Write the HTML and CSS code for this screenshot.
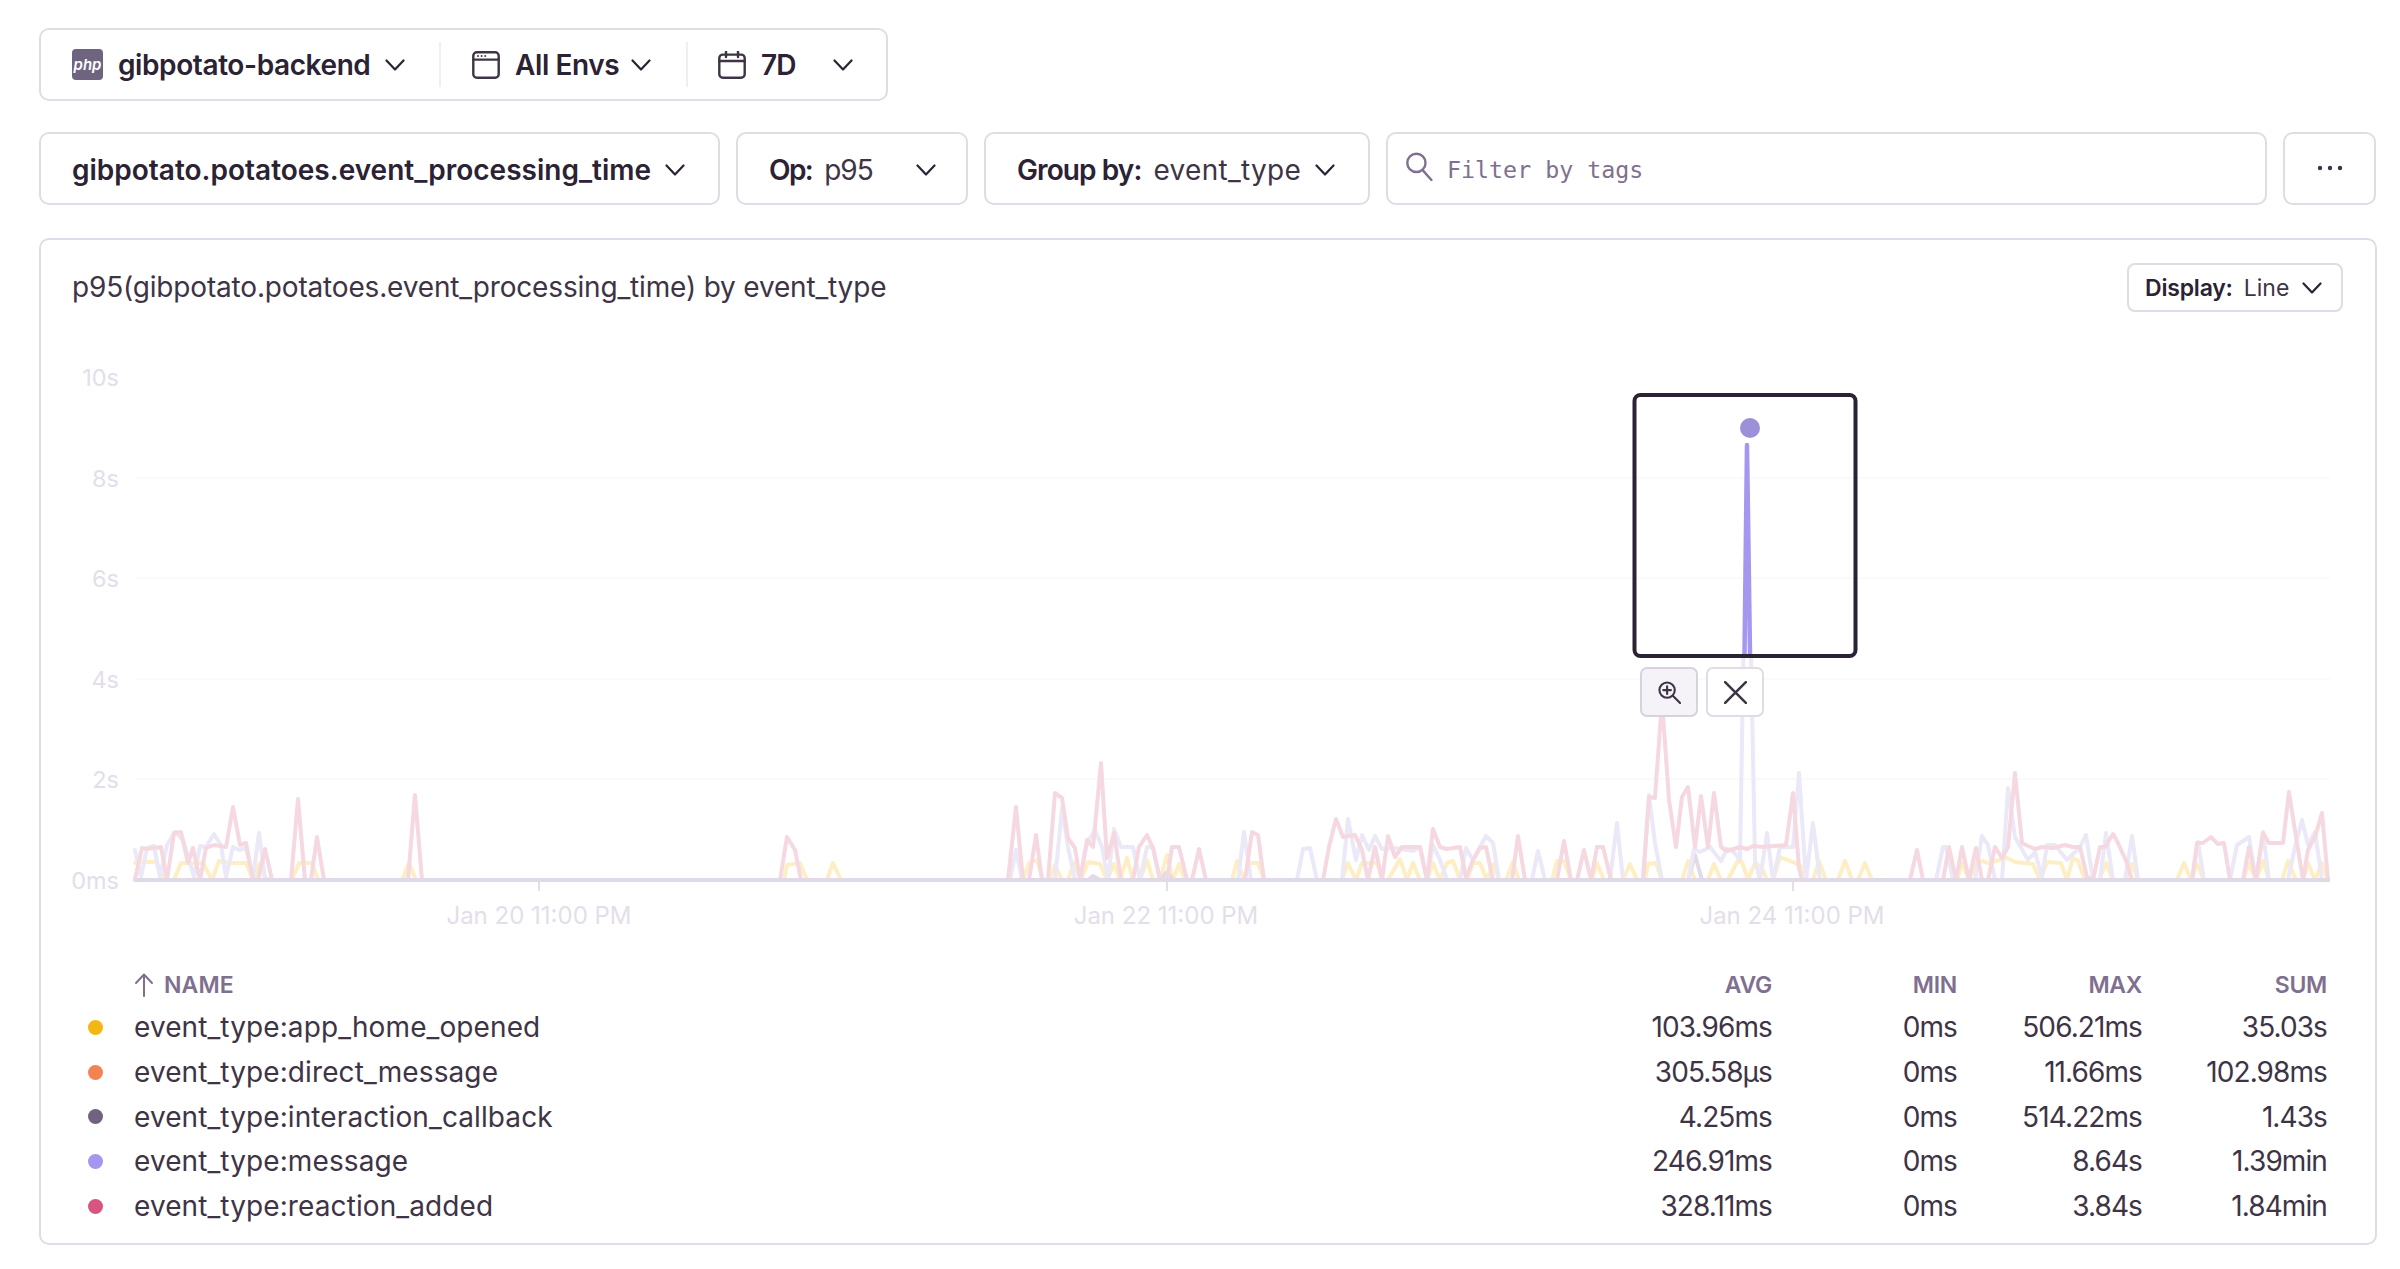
FILE: index.html
```html
<!DOCTYPE html>
<html lang="en">
<head>
<meta charset="utf-8">
<title>Metrics</title>
<link rel="stylesheet" href="styles.css">
</head>
<body>
<main class="page">
  <div class="page-filter">
    <div class="pf-item pf-project">
      <svg class="php" viewBox="0 0 31 31"><rect width="31" height="31" rx="4" fill="#6f6480"/></svg>
      <span class="php-label">php</span>
      <span class="pf-text">gibpotato-backend</span>
      <svg class="chev" viewBox="0 0 20 12"><path d="M1.5 1.5 10 10.5 18.5 1.5"/></svg>
    </div>
    <div class="pf-item pf-env">
      <svg class="pf-icon" viewBox="0 0 28 28"><rect x="1.3" y="1.3" width="25.4" height="25.4" rx="3.5"/><path d="M1.3 8.6H26.7"/><circle class="dot" cx="6" cy="5" r="1"/><circle class="dot" cx="9.6" cy="5" r="1"/><circle class="dot" cx="13.2" cy="5" r="1"/></svg>
      <span class="pf-text">All Envs</span>
      <svg class="chev" viewBox="0 0 20 12"><path d="M1.5 1.5 10 10.5 18.5 1.5"/></svg>
    </div>
    <div class="pf-item pf-date">
      <svg class="pf-icon" viewBox="0 0 28 28"><rect x="1.3" y="3.6" width="25.4" height="23.1" rx="3.5"/><path d="M1.3 10H26.7M8 .5V6M20 .5V6"/></svg>
      <span class="pf-text pf-text-date">7D</span>
      <svg class="chev chev-date" viewBox="0 0 20 12"><path d="M1.5 1.5 10 10.5 18.5 1.5"/></svg>
    </div>
  </div>

  <div class="query">
    <div class="ctl ctl-metric"><b>gibpotato.potatoes.event_processing_time</b><svg class="chev" viewBox="0 0 20 12"><path d="M1.5 1.5 10 10.5 18.5 1.5"/></svg></div>
    <div class="ctl ctl-op"><b>Op:</b><span>p95</span><svg class="chev" viewBox="0 0 20 12"><path d="M1.5 1.5 10 10.5 18.5 1.5"/></svg></div>
    <div class="ctl ctl-group"><b>Group by:</b><span>event_type</span><svg class="chev" viewBox="0 0 20 12"><path d="M1.5 1.5 10 10.5 18.5 1.5"/></svg></div>
    <div class="ctl ctl-search">
      <svg class="search" viewBox="0 0 26 28"><circle cx="10.5" cy="10.5" r="8.8"/><path d="M16.5 17.5 25 27"/></svg>
      <span class="placeholder">Filter by tags</span>
    </div>
    <div class="ctl ctl-more"><svg class="more" viewBox="0 0 26 6"><circle cx="3" cy="3" r="2.2"/><circle cx="13" cy="3" r="2.2"/><circle cx="23" cy="3" r="2.2"/></svg></div>
  </div>

  <section class="panel">
    <header class="panel-head">
      <h2 class="panel-title">p95(gibpotato.potatoes.event_processing_time) by event_type</h2>
      <div class="display-btn"><b>Display:</b><span>Line</span><svg class="chev" viewBox="0 0 20 12"><path d="M1.5 1.5 10 10.5 18.5 1.5"/></svg></div>
    </header>

    <div class="chart">
      <svg class="chart-svg" viewBox="41 330 2333 635">
        <g class="grid">
          <path d="M135 478H2330M135 578H2330M135 679H2330M135 779H2330"/>
        </g>
        <g class="axis-y">
          <text x="119" y="386">10s</text>
          <text x="119" y="487">8s</text>
          <text x="119" y="587">6s</text>
          <text x="119" y="688">4s</text>
          <text x="119" y="788">2s</text>
          <text x="119" y="889">0ms</text>
        </g>
        <g class="axis-x">
          <path class="tick" d="M539 882V891M1167 882V891M1793 882V891"/>
          <text x="539" y="924">Jan 20 11:00 PM</text>
          <text x="1166" y="924">Jan 22 11:00 PM</text>
          <text x="1792" y="924">Jan 24 11:00 PM</text>
        </g>
        <polyline class="s-yellow" points="135,863 142,862 156,862 165,880 174,880 181,863 203,863 212,880 219,861 231,863 246,863 253,880 260,863 266,880 292,880 299,863 312,863 318,880 402,880 409,863 416,880 784,880 787,865 800,863 807,880 827,880 833,863 841,880 1023,880 1029,863 1037,860 1043,880 1050,880 1055,865 1062,880 1068,880 1074,863 1081,880 1088,862 1100,864 1107,880 1114,864 1120,880 1127,858 1133,880 1140,880 1147,860 1153,880 1160,880 1167,855 1173,880 1179,864 1185,880 1232,880 1237,861 1244,880 1250,863 1258,863 1264,880 1342,880 1348,863 1356,880 1362,863 1377,863 1383,880 1388,880 1400,859 1407,880 1413,863 1420,880 1427,880 1433,863 1440,880 1447,863 1453,861 1460,880 1467,880 1473,863 1480,863 1487,880 1493,864 1499,880 1506,880 1513,862 1519,880 1552,880 1557,861 1564,861 1571,880 1592,880 1597,863 1604,880 1623,880 1630,864 1637,880 1645,880 1648,864 1656,863 1662,880 1682,880 1688,861 1695,880 1708,880 1714,864 1721,880 1728,880 1737,862 1742,862 1748,880 1755,863 1762,868 1767,880 1773,880 1780,857 1795,863 1802,867 1807,880 1813,880 1819,861 1826,880 1838,880 1845,861 1852,880 1858,880 1865,863 1872,880 1957,880 1962,863 1969,880 1976,863 1982,861 1988,863 2007,858 2015,862 2033,864 2040,880 2047,862 2061,863 2067,880 2073,858 2078,861 2085,880 2099,880 2106,863 2113,880 2126,880 2132,864 2138,880 2177,880 2184,863 2191,880 2197,864 2204,880 2243,880 2249,863 2256,880 2263,861 2269,880 2282,880 2288,861 2296,880 2303,880 2308,863 2315,880 2322,863 2328,880"/>
        <polyline class="s-gray" points="135,880 1088,880 1093,876 1100,880 1160,880 1167,872 1173,880 1688,880 1695,855 1702,880 2328,880"/>
        <polyline class="s-purple" points="135,850 141,877 147,848 154,846 160,877 167,845 175,832 183,840 194,877 200,846 206,847 214,834 221,845 226,877 233,847 239,850 246,848 253,878 259,833 265,878 272,880 1010,880 1016,850 1022,880 1055,880 1062,808 1068,847 1075,880 1080,880 1087,843 1095,830 1102,847 1108,880 1114,829 1121,847 1133,847 1140,880 1147,847 1153,847 1160,880 1238,880 1244,832 1251,880 1297,880 1303,849 1310,848 1317,880 1342,880 1348,819 1356,860 1362,835 1369,850 1375,836 1382,849 1395,848 1413,851 1420,847 1427,880 1433,845 1440,860 1447,880 1460,880 1466,848 1473,860 1480,847 1486,836 1493,843 1499,880 1532,880 1538,851 1545,880 1610,880 1617,823 1623,880 1643,880 1649,795 1655,843 1662,880 1688,880 1694,849 1700,852 1710,847 1721,861 1727,849 1733,851 1740,860 1747,445 1755,860 1760,880 1767,833 1773,880 1780,847 1793,847 1799,773 1806,880 1813,823 1820,880 1936,880 1943,847 1946,847 1953,880 1975,880 1982,836 1988,845 1995,880 2002,880 2008,788 2015,837 2028,860 2035,852 2042,877 2047,845 2055,845 2067,860 2080,847 2086,835 2093,880 2100,880 2106,833 2113,880 2125,880 2132,836 2138,880 2192,880 2198,842 2204,880 2230,880 2237,845 2249,837 2256,880 2263,832 2269,880 2288,880 2295,847 2302,820 2308,845 2315,832 2322,880 2328,880"/>
        <polyline class="s-pink" points="135,879 142,848 147,849 161,847 167,880 174,833 181,832 188,863 193,848 200,880 206,848 214,845 226,847 233,807 240,845 246,843 253,880 258,880 265,849 272,880 291,880 298,799 305,880 311,880 317,837 324,880 408,880 415,795 422,880 780,880 787,837 795,850 801,880 1008,880 1016,807 1023,880 1029,880 1036,835 1042,880 1048,880 1055,793 1062,798 1068,838 1075,848 1080,880 1087,840 1093,847 1101,763 1107,858 1114,833 1121,880 1133,880 1139,847 1147,835 1153,848 1160,880 1167,880 1172,847 1179,847 1187,880 1192,880 1199,849 1206,880 1245,880 1252,832 1258,835 1264,880 1323,880 1329,847 1336,819 1343,837 1355,835 1362,850 1368,880 1375,847 1382,880 1388,836 1395,857 1402,847 1420,847 1427,880 1433,829 1440,847 1447,849 1460,847 1466,878 1473,860 1480,848 1486,847 1493,880 1512,880 1518,836 1525,880 1557,880 1564,841 1571,880 1577,880 1584,850 1591,880 1597,847 1603,847 1611,880 1643,880 1649,797 1655,798 1662,700 1669,800 1676,847 1682,797 1688,787 1695,847 1701,796 1708,847 1714,793 1721,847 1727,851 1740,847 1747,849 1753,846 1763,847 1786,845 1793,793 1799,868 1802,880 1910,880 1917,850 1923,880 1943,880 1949,847 1956,880 1962,847 1969,880 1976,848 1982,880 1988,880 1995,847 2002,858 2008,847 2015,773 2022,843 2028,846 2035,849 2042,847 2053,848 2065,845 2073,847 2080,847 2087,877 2093,880 2100,847 2105,847 2113,834 2118,843 2127,863 2132,880 2192,880 2197,843 2203,843 2211,837 2218,844 2224,843 2230,880 2243,880 2249,847 2256,880 2263,833 2269,843 2283,843 2289,792 2296,837 2303,880 2308,850 2315,837 2322,813 2328,880"/>
        <path class="baseline" d="M135 880H2330"/>
        <rect class="focus" x="1634.5" y="395" width="221" height="261" rx="6"/>
        <path class="focus-grid" d="M1637 478H1853M1637 578H1853"/>
        <path class="focus-line" d="M1744.5 654 1747 445 1750 654"/>
        <circle class="focus-dot" cx="1750" cy="428" r="10"/>
      </svg>
      <div class="zoom-btns">
        <button class="zbtn zbtn-on" type="button"><svg viewBox="0 0 24 24"><circle cx="9.5" cy="9.5" r="8"/><path d="M15.5 15.5 23 23M9.5 5.5V13.5M5.5 9.5H13.5"/></svg></button>
        <button class="zbtn" type="button"><svg viewBox="0 0 20 20"><path d="M1 1 19 19M19 1 1 19"/></svg></button>
      </div>
    </div>

    <div class="summary">
      <div class="sum-row sum-head">
        <span class="c-name"><svg class="arrow" viewBox="0 0 20 24"><path d="M10 23V2M2 10 10 1.5 18 10"/></svg>NAME</span>
        <span class="c-num">AVG</span><span class="c-num">MIN</span><span class="c-num">MAX</span><span class="c-num">SUM</span>
      </div>
      <div class="sum-row">
        <i class="swatch sw-yellow"></i><span class="c-name">event_type:app_home_opened</span>
        <span class="c-num">103.96ms</span><span class="c-num">0ms</span><span class="c-num">506.21ms</span><span class="c-num">35.03s</span>
      </div>
      <div class="sum-row">
        <i class="swatch sw-orange"></i><span class="c-name">event_type:direct_message</span>
        <span class="c-num">305.58μs</span><span class="c-num">0ms</span><span class="c-num">11.66ms</span><span class="c-num">102.98ms</span>
      </div>
      <div class="sum-row">
        <i class="swatch sw-gray"></i><span class="c-name">event_type:interaction_callback</span>
        <span class="c-num">4.25ms</span><span class="c-num">0ms</span><span class="c-num">514.22ms</span><span class="c-num">1.43s</span>
      </div>
      <div class="sum-row">
        <i class="swatch sw-purple"></i><span class="c-name">event_type:message</span>
        <span class="c-num">246.91ms</span><span class="c-num">0ms</span><span class="c-num">8.64s</span><span class="c-num">1.39min</span>
      </div>
      <div class="sum-row">
        <i class="swatch sw-pink"></i><span class="c-name">event_type:reaction_added</span>
        <span class="c-num">328.11ms</span><span class="c-num">0ms</span><span class="c-num">3.84s</span><span class="c-num">1.84min</span>
      </div>
    </div>
  </section>
</main>
</body>
</html>
```

FILE: styles.css
```css
* { box-sizing: border-box; }
html, body { margin: 0; background: #fff; }
body { font-family: Inter, "Noto Sans", sans-serif; color: #2b2233; }
.page { width: 2400px; height: 1269px; padding: 28px 24px 0 39px; overflow: hidden; }
b { font-weight: 600; }

.chev { width: 20px; height: 12px; flex: none; fill: none; stroke: #2b2233; stroke-width: 2.2; stroke-linecap: round; stroke-linejoin: round; }

.page-filter { display: flex; width: 849px; height: 73px; border: 2px solid #e0dce5; border-radius: 10px; align-items: center; }
.pf-item { position: relative; display: flex; align-items: center; height: 45px; }
.pf-text { font-size: 28px; font-weight: 600; letter-spacing: -0.4px; white-space: nowrap; }
.pf-text-date { letter-spacing: -1px; }
.pf-project { width: 400px; padding-left: 31px; border-right: 2px solid #f0edf3; }
.php { width: 31px; height: 31px; flex: none; margin-right: 15px; }
.php-label { position: absolute; left: 31px; width: 31px; text-align: center; color: #fff; font-size: 15px; font-style: italic; font-weight: 600; }
.pf-project .chev { margin-left: 15px; }
.pf-env { width: 247px; padding-left: 31px; border-right: 2px solid #f0edf3; }
.pf-icon { width: 28px; height: 28px; flex: none; margin-right: 15px; fill: none; stroke: #3e3446; stroke-width: 2.4; stroke-linecap: round; }
.pf-icon .dot { fill: #3e3446; stroke: none; }
.pf-env .chev { margin-left: 12px; }
.pf-date { flex: 1; padding-left: 30px; }
.chev-date { margin-left: 38px; }

.query { display: flex; gap: 16px; margin-top: 31px; height: 73px; }
.ctl { display: flex; align-items: center; padding-top: 2px; border: 2px solid #e0dce5; border-radius: 10px; font-size: 28px; white-space: nowrap; }
.ctl span { color: #3e3446; }
.ctl-metric { width: 681px; padding-left: 31px; }
.ctl-metric .chev { margin-left: 14px; }
.ctl-op { width: 232px; padding-left: 31px; }
.ctl-op b { letter-spacing: -1.6px; }
.ctl-op span { margin-left: 12px; letter-spacing: -1px; }
.ctl-op .chev { margin-left: 43px; }
.ctl-group { width: 386px; padding-left: 31px; }
.ctl-group b { letter-spacing: -0.9px; }
.ctl-group span { margin-left: 12px; letter-spacing: 0.3px; }
.ctl-group .chev { margin-left: 14px; }
.ctl-search { flex: none; width: 881px; padding-left: 17px; }
.search { width: 28px; height: 29px; margin-right: 14px; margin-top: -7px; fill: none; stroke: #80708f; stroke-width: 2.3; stroke-linecap: round; }
.placeholder { font-family: "DejaVu Sans Mono", monospace; font-size: 23.3px; color: #80708f !important; }
.ctl-more { width: 93px; justify-content: center; padding-top: 0; }
.more { width: 26px; height: 6px; fill: #3e3446; margin-top: -2px; }

.panel { margin-top: 33px; width: 2338px; height: 1007px; border: 2px solid #e0dce5; border-radius: 10px; }
.panel-head { height: 90px; display: flex; justify-content: space-between; align-items: flex-start; padding: 23px 32px 0 31px; }
.panel-title { margin: 0; font-size: 28px; line-height: 48px; font-weight: 400; color: #3e3446; letter-spacing: -0.17px; }
.display-btn { width: 216px; height: 49px; display: flex; align-items: center; padding-left: 16px; border: 2px solid #e0dce5; border-radius: 8px; font-size: 23px; }
.display-btn b { letter-spacing: -0.2px; }
.display-btn span { margin-left: 11px; color: #3e3446; }
.display-btn .chev { margin-left: 13px; }

.chart { position: relative; height: 635px; }
.chart-svg { display: block; width: 2333px; height: 635px; fill: none; }
.grid path { stroke: #fafafb; stroke-width: 2; }
.axis-y text { fill: #e4deea; font-size: 23.5px; text-anchor: end; }
.axis-x text { fill: #e4deea; font-size: 24px; text-anchor: middle; }
.tick { stroke: #e4deea; stroke-width: 2; }
polyline { fill: none; stroke-width: 4; stroke-linejoin: round; stroke-linecap: round; }
.s-yellow { stroke: #fdeec4; }
.s-gray { stroke: #e0dbe4; }
.s-purple { stroke: #ebe8f8; }
.s-pink { stroke: #f6d8e1; }
.baseline { stroke: #e2d9e6; stroke-width: 4; }
.focus { fill: #fff; stroke: #2b2233; stroke-width: 4; }
.focus-grid { stroke: #fafafb; stroke-width: 2; }
.focus-line { stroke: #a397f0; stroke-width: 4.5; stroke-linejoin: round; fill: none; }
.focus-dot { fill: #9c90d8; }

.zoom-btns { position: absolute; left: 1599px; top: 337px; display: flex; gap: 8px; }
.zbtn { width: 58px; height: 50px; padding: 0; display: flex; align-items: center; justify-content: center; background: #fff; border: 2px solid #e0dce5; border-radius: 7px; }
.zbtn-on { background: #f5f3f7; border-color: #d8d2df; }
.zbtn svg { width: 23px; height: 23px; fill: none; stroke: #3e3446; stroke-width: 2.2; stroke-linecap: round; }

.summary { padding-right: 48px; }
.sum-row { display: grid; grid-template-columns: 93px 1fr repeat(4, 185px); align-items: center; height: 44.7px; font-size: 28px; color: #3e3446; white-space: nowrap; }
.sum-head { height: 40px; font-size: 23px; font-weight: 600; color: #80708f; }
.sum-head .c-name { grid-column: 2; display: flex; align-items: center; }
.arrow { width: 20px; height: 24px; margin-right: 10px; fill: none; stroke: #80708f; stroke-width: 2; stroke-linecap: round; stroke-linejoin: round; }
.c-name { letter-spacing: 0.1px; }
.c-num { text-align: right; letter-spacing: -0.9px; }
.sum-head .c-num { letter-spacing: -0.3px; }
.swatch { width: 15px; height: 15px; border-radius: 50%; margin-left: 47px; }
.sw-yellow { background: #f2b712; }
.sw-orange { background: #f58252; }
.sw-gray { background: #71637e; }
.sw-purple { background: #a397f0; }
.sw-pink { background: #d6567f; }
```
